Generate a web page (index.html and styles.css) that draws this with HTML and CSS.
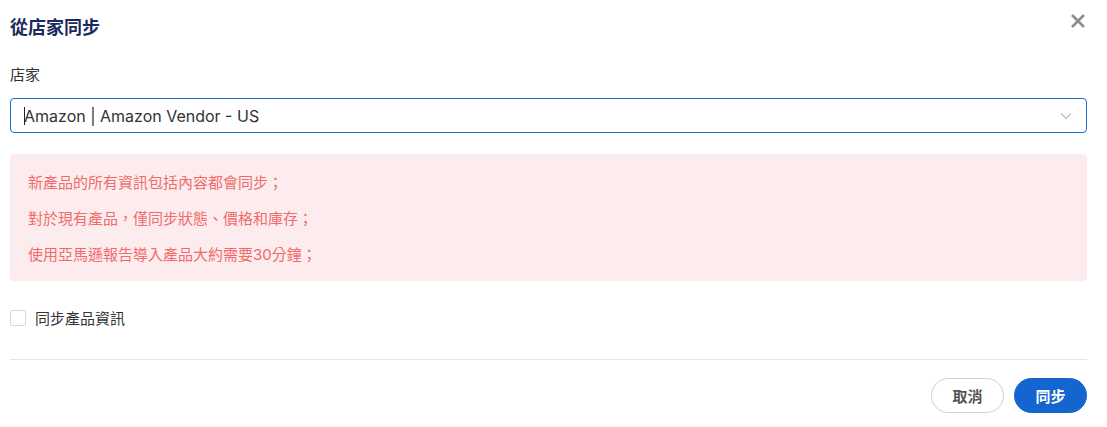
FILE: index.html
```html
<!DOCTYPE html>
<html lang="zh-Hant">
<head>
    <meta charset="UTF-8">
    <title>從店家同步</title>
    <link rel="stylesheet" href="styles.css">
</head>
<body>
    <div class="dialog">
        <header class="dialog-head">
            <h2>從店家同步</h2>
            <svg class="close" width="16" height="16" viewBox="0 0 16 16"><path d="M2 2 L14 14 M14 2 L2 14" stroke="#8a8d93" stroke-width="2.6"/></svg>
        </header>
        <label class="field-label">店家</label>
        <div class="select">
            <span class="caret"></span><span>Amazon | Amazon Vendor - US</span>
            <svg class="chevron" width="12" height="8" viewBox="0 0 12 8"><path d="M1 1.5 L6 6.5 L11 1.5" fill="none" stroke="#b8bcc4" stroke-width="1.2"/></svg>
        </div>
        <div class="notice">
            <p>新產品的所有資訊包括內容都會同步；</p>
            <p>對於現有產品，僅同步狀態、價格和庫存；</p>
            <p>使用亞馬遜報告導入產品大約需要30分鐘；</p>
        </div>
        <label class="check">
            <span class="box"></span>
            同步產品資訊
        </label>
        <hr>
        <footer class="actions">
            <button class="btn">取消</button>
            <button class="btn primary">同步</button>
        </footer>
    </div>
</body>
</html>
```

FILE: styles.css
```css
body {
    margin: 0;
    background: #fff;
    font-family: 'Inter', 'Noto Sans CJK TC', sans-serif;
    color: #333;
}
.dialog {
    padding: 0 20px 0 10px;
}
.dialog-head {
    display: flex;
    justify-content: space-between;
    align-items: center;
    height: 56px;
}
.dialog-head h2 {
    margin: -4px 0 0;
    font-size: 18px;
    font-weight: 700;
    color: #1b2a5c;
}
.close {
    margin-right: 1px;
    margin-top: -14px;
}
.field-label {
    display: block;
    margin-top: 8px;
    font-size: 15px;
    color: #333;
    line-height: 22px;
}
.select {
    margin-top: 12px;
    height: 33px;
    border: 1px solid #1a6fd0;
    border-radius: 4px;
    display: flex;
    align-items: center;
    padding: 0 14px 0 13px;
    font-size: 16px;
    color: #333;
}
.caret {
    width: 1px;
    height: 18px;
    background: #222;
    margin-right: -1px;
}
.chevron {
    margin-left: auto;
}
.notice {
    margin-top: 21px;
    background: #fdecee;
    border-radius: 4px;
    padding: 11px 18px 8px;
}
.notice p {
    margin: 0;
    font-size: 15px;
    line-height: 36px;
    color: #f26b6b;
}
.check {
    display: flex;
    align-items: center;
    gap: 9px;
    margin-top: 26px;
    font-size: 15px;
    color: #333;
}
.box {
    width: 14px;
    height: 14px;
    border: 1px solid #d6d8dc;
    border-radius: 2px;
}
hr {
    border: none;
    border-top: 1px solid #e6e6e6;
    margin: 31px 0 0;
}
.actions {
    display: flex;
    justify-content: flex-end;
    gap: 10px;
    margin-top: 18px;
}
.btn {
    width: 73px;
    height: 35px;
    border-radius: 18px;
    border: 1px solid #cfcfcf;
    background: #fff;
    font-family: inherit;
    font-size: 15px;
    font-weight: 700;
    color: #555;
}
.btn.primary {
    background: #1565d0;
    border-color: #1565d0;
    color: #fff;
}
```
